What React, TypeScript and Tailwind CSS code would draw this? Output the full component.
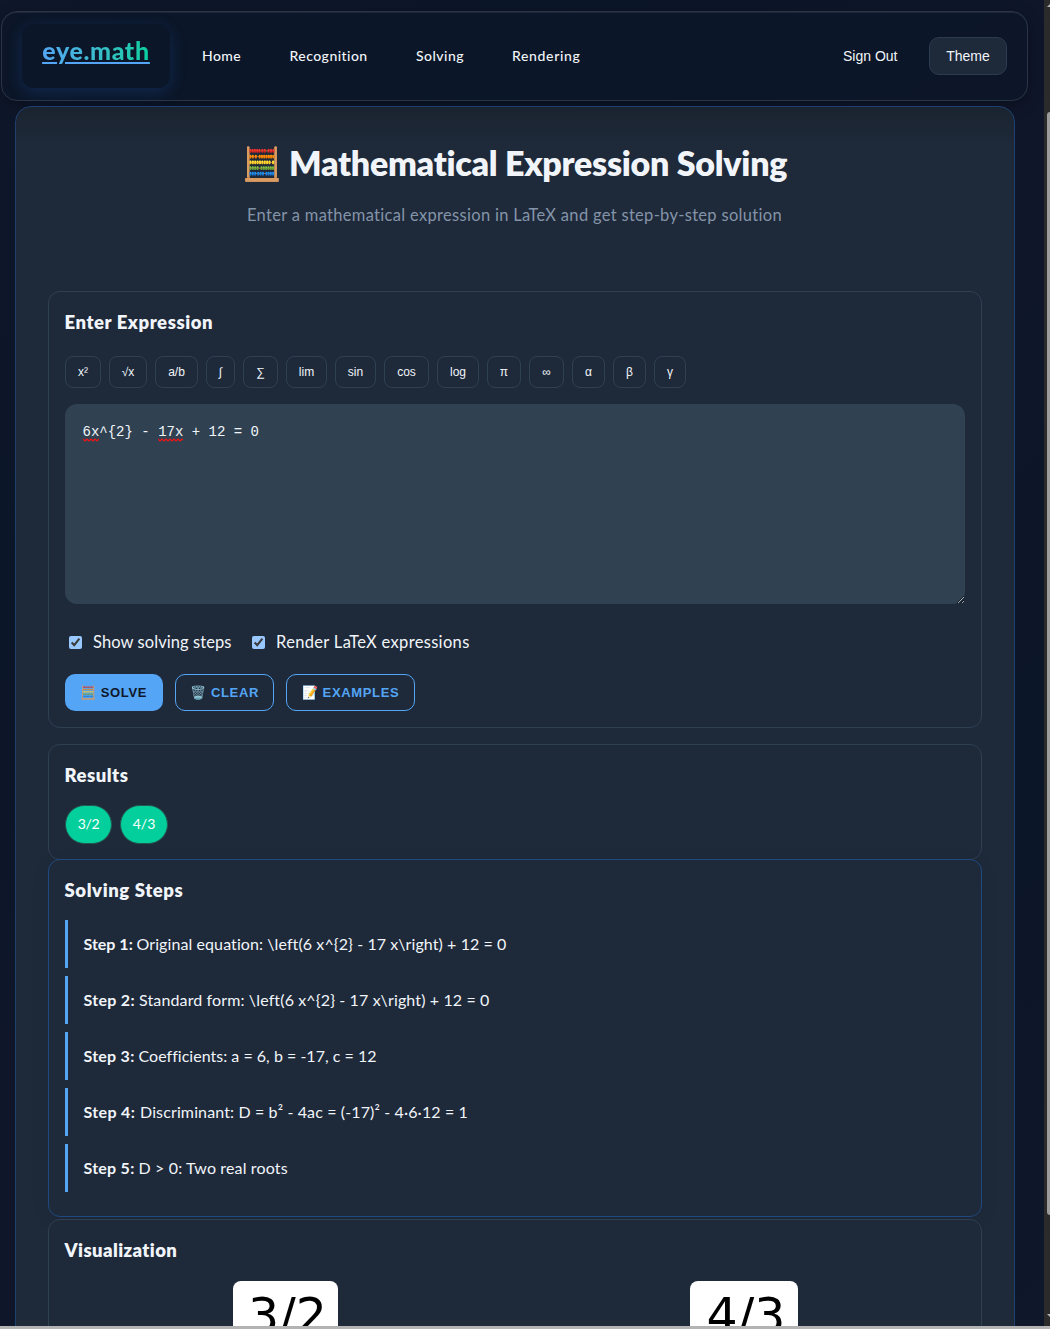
import type { ReactNode } from 'react';

const navItems = [
  { label: 'Home', cls: 'w-[87.5px] tracking-[0.4px]' },
  { label: 'Recognition', cls: 'w-[126.5px] tracking-[0.46px]' },
  { label: 'Solving', cls: 'w-[96px] tracking-[0.47px]' },
  { label: 'Rendering', cls: 'w-[116px] tracking-[0.65px]' },
];

const symbols = [
  { label: 'x²', cls: 'w-9' },
  { label: '√x', cls: 'w-[38px]' },
  { label: 'a/b', cls: 'w-[43px]' },
  { label: '∫', cls: 'w-[29px]' },
  { label: '∑', cls: 'w-[35px]' },
  { label: 'lim', cls: 'w-[41px]' },
  { label: 'sin', cls: 'w-[41px]' },
  { label: 'cos', cls: 'w-[45px]' },
  { label: 'log', cls: 'w-[42px]' },
  { label: 'π', cls: 'w-[34px]' },
  { label: '∞', cls: 'w-[35px]' },
  { label: 'α', cls: 'w-[33px]' },
  { label: 'β', cls: 'w-[33px]' },
  { label: 'γ', cls: 'w-8' },
];

const steps = [
  { text: 'Original equation: \\left(6 x^{2} - 17 x\\right) + 12 = 0', label: 'w-[53px]', cls: 'tracking-[0.09px]' },
  { text: 'Standard form: \\left(6 x^{2} - 17 x\\right) + 12 = 0', label: 'w-[55.5px] tracking-[0.3px]', cls: 'tracking-[0.13px]' },
  { text: 'Coefficients: a = 6, b = -17, c = 12', label: 'w-[55px] tracking-[0.25px]', cls: 'tracking-[0.02px]' },
  { text: 'Discriminant: D = b² - 4ac = (-17)² - 4·6·12 = 1', label: 'w-[56.5px] tracking-[0.35px]', cls: 'tracking-[0.13px]' },
  { text: 'D > 0: Two real roots', label: 'w-[55px] tracking-[0.25px]', cls: 'tracking-[0.15px]' },
];

function Heading({ children, cls }: { children: ReactNode; cls: string }) {
  return <h2 className={`-ml-[0.5px] pt-px text-[18.5px] leading-6 font-extrabold text-[#f1f5f9] ${cls}`}>{children}</h2>;
}

function Misspelled({ children }: { children: ReactNode }) {
  return (
    <span className="relative inline-block">
      {children}
      <svg className="absolute top-[17px] left-0 h-1 w-full">
        <path
          d="M0 1L2 3L4 1L6 3L8 1L10 3L12 1L14 3L16 1L18 3L20 1L22 3L24 1L26 3"
          fill="none"
          stroke="#f01414"
          strokeWidth="1.1"
          strokeLinejoin="round"
        />
      </svg>
    </span>
  );
}

function Header() {
  return (
    <header className="mt-[11px] ml-px flex h-[90px] w-[1027px] shrink-0 items-center rounded-2xl border border-[#293546] bg-[#0b1628]/80 pr-5 pb-px pl-5 shadow-[0_4px_16px_rgba(0,0,0,0.3),inset_0_1px_0_rgba(255,255,255,0.08)]">
      <a className="flex h-16 w-[148px] items-start justify-center rounded-xl bg-[#0b1628] pt-[10px] shadow-[0_4px_16px_rgba(37,99,200,0.25)]">
        <span className="bg-gradient-to-r from-[#54a5f5] to-[#05cf9f] bg-clip-text text-[25px] leading-8 font-black tracking-[0.6px] text-transparent underline decoration-[#54a5f5] decoration-2 underline-offset-[2px]">
          eye.math
        </span>
      </a>
      <nav className="ml-8 flex text-sm font-medium text-[#f1f5f9]">
        {navItems.map((n) => (
          <a key={n.label} className={n.cls}>{n.label}</a>
        ))}
      </nav>
      <div className="ml-auto flex items-center gap-[31.5px] font-['Liberation_Sans',sans-serif] text-sm text-[#f1f5f9]">
        <button>Sign Out</button>
        <button className="h-[38px] w-[78px] rounded-[10px] border border-[#2d3d50] bg-[#1e293a]">Theme</button>
      </div>
    </header>
  );
}

function ExpressionCard() {
  return (
    <section className="flex h-[437px] flex-col rounded-xl border border-[#2f4052] px-4 pt-[17px]">
      <Heading cls="tracking-[0.56px]">Enter Expression</Heading>
      <div className="mt-[22px] flex gap-2 font-['Liberation_Sans',sans-serif] text-xs text-[#f1f5f9]">
        {symbols.map((s) => (
          <button key={s.label} className={`h-8 shrink-0 rounded-lg border border-[#2f4052] ${s.cls}`}>{s.label}</button>
        ))}
      </div>
      <div className="mt-4 h-[200px] w-[900px] resize-y overflow-auto rounded-xl bg-[#304152] px-[17.5px] pt-[17px] font-['Liberation_Mono',monospace] text-sm leading-[22px] text-[#f1f5f9] [color-scheme:dark]">
        <Misspelled>6x</Misspelled>
        {'^{2} - '}
        <Misspelled>17x</Misspelled>
        {' + 12 = 0'}
      </div>
      <div className="mt-[26px] flex h-6 items-center text-[16.5px] text-[#f1f5f9]">
        <label className="flex w-[183px] items-center">
          <input type="checkbox" defaultChecked className="mr-[11px] ml-1 size-[13px] [color-scheme:dark]" />
          <span className="tracking-[0.08px] whitespace-nowrap">Show solving steps</span>
        </label>
        <label className="flex items-center">
          <input type="checkbox" defaultChecked className="mr-[11px] ml-1 size-[13px] [color-scheme:dark]" />
          <span className="tracking-[0.33px] whitespace-nowrap">Render LaTeX expressions</span>
        </label>
      </div>
      <div className="mt-5 flex gap-3 font-['Liberation_Sans',sans-serif] text-[13px] font-bold tracking-[0.65px] text-[#54a5f5]">
        <button className="h-[37px] w-[98px] rounded-[10px] bg-[#54a5f5] pr-px whitespace-nowrap text-[#0f172a]">
          <span className="opacity-80">🧮</span> SOLVE
        </button>
        <button className="h-[37px] w-[99px] rounded-[10px] border border-[#54a5f5] whitespace-nowrap">🗑️ CLEAR</button>
        <button className="h-[37px] w-[129px] rounded-[10px] border border-[#54a5f5] whitespace-nowrap">📝 EXAMPLES</button>
      </div>
    </section>
  );
}

export default function App() {
  return (
    <div className="flex h-[1329px] w-[1050px] flex-col overflow-hidden bg-[#0c1628] font-['Lato',sans-serif] [font-variant-ligatures:none]">
      <div className="flex h-[1326px] shrink-0">
        <div className="flex w-[1044px] flex-col overflow-hidden bg-[linear-gradient(135deg,#0f172a_0%,#0b1628_25%,#10162a_50%,#0b1628_75%,#0f172a_100%)]">
          <Header />
          <main className="mt-[5px] ml-[15px] flex h-[1400px] w-[1000px] shrink-0 flex-col rounded-t-2xl border border-[#1d4070] bg-[linear-gradient(180deg,#1a2430_0px,#1e293a_40px)] px-8">
            <div className="flex h-[184px] flex-col items-center pt-9">
              <h1 className="flex items-center gap-[7px] text-[34px] leading-10 font-extrabold whitespace-nowrap text-[#f1f5f9]">
                <span className="text-[32px] font-normal">🧮</span>
                <span className="w-[499px] tracking-[-0.28px]">Mathematical Expression Solving</span>
              </h1>
              <p className="mt-5 -ml-px text-[16.5px] leading-6 tracking-[0.31px] text-[#8494a8]">
                Enter a mathematical expression in LaTeX and get step-by-step solution
              </p>
            </div>
            <ExpressionCard />
            <section className="mt-4 flex h-[116px] shrink-0 flex-col rounded-xl border border-[#2f4052] px-4 pt-[17px]">
              <Heading cls="tracking-[0.5px]">Results</Heading>
              <div className="mt-[18px] flex gap-2 text-sm text-white">
                <span className="flex h-[39px] w-[47px] items-center justify-center rounded-[20px] border border-[#24584f] bg-[#03cf9c] pb-px tracking-[-0.4px]">3/2</span>
                <span className="flex h-[39px] w-12 items-center justify-center rounded-[20px] border border-[#24584f] bg-[#03cf9c] pb-px">4/3</span>
              </div>
            </section>
            <section className="-mt-px flex h-[358px] shrink-0 flex-col rounded-xl border border-[#1f4a80] bg-[#1e293a] px-4 pt-[17px] shadow-[0_4px_20px_rgba(0,0,0,0.06)]">
              <Heading cls="tracking-[0.6px]">Solving Steps</Heading>
              <ol className="mt-[18px] flex flex-col gap-2 text-base text-[#f1f5f9]">
                {steps.map((s, i) => (
                  <li key={s.text} className="flex h-12 items-center border-l-3 border-[#54a5f5] pl-[15.5px]">
                    <strong className={`shrink-0 font-bold ${s.label}`}>Step {i + 1}:</strong>
                    <span className={s.cls}>{s.text}</span>
                  </li>
                ))}
              </ol>
            </section>
            <section className="mt-0.5 flex h-[240px] shrink-0 flex-col rounded-xl border border-[#2f4052] bg-[#1e293a] px-4 pt-[17px]">
              <Heading cls="tracking-[0.4px]">Visualization</Heading>
              <div className="mt-[19px] flex pl-[168px] font-['DejaVu_Sans',sans-serif] text-[49px] leading-[56px] text-black">
                <div className="flex h-[100px] w-[105px] justify-center rounded-lg bg-white pt-2 pl-1">3/2</div>
                <div className="ml-[352px] flex h-[100px] w-[108px] justify-center rounded-lg bg-white pt-2 pl-1">4/3</div>
              </div>
            </section>
          </main>
        </div>
        <div className="flex w-1.5 flex-col items-end overflow-hidden bg-[#2b2b2b]">
          <svg className="mt-1 h-[3px] w-[3px]" viewBox="0 0 3 3"><path d="M0 3L3 0v3z" fill="#b5b5b5" /></svg>
          <div className="mt-[105px] h-[1103px] w-[3px] rounded-l-[3px] bg-[#9c9c9c]" />
          <svg className="mt-auto mb-[9px] h-[3px] w-[3px]" viewBox="0 0 3 3"><path d="M0 0h3v3z" fill="#b5b5b5" /></svg>
        </div>
      </div>
      <div className="h-[3px] bg-[#b3b3b3]" />
    </div>
  );
}
